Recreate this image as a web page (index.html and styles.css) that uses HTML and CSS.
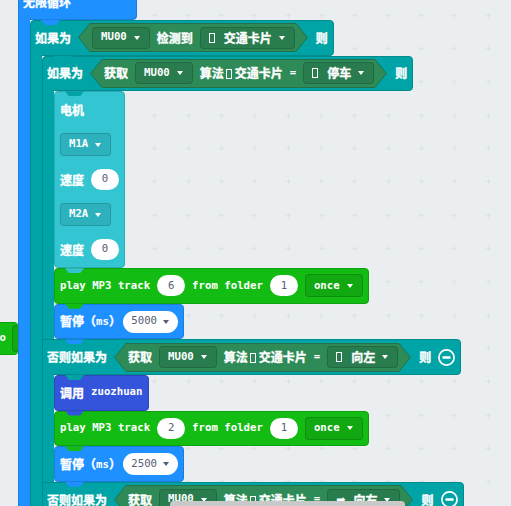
FILE: index.html
```html
<!DOCTYPE html>
<html lang="zh-CN">
<head>
<meta charset="utf-8">
<title>积木编辑器</title>
<link rel="stylesheet" href="styles.css">
</head>
<body>
<div class="workspace">

  <!-- a second stack, mostly hidden to the left of the canvas -->
  <div class="stmt music stray"><span class="m">to</span><span class="dd"><span class="m">x</span></span></div>

  <div class="cblock basic forever">
    <div class="chead"><span class="lbl">无限循环</span></div>
    <div class="cbody">
      <div class="carm"></div>
      <div class="mouth">

        <div class="cblock logic">
          <div class="chead">
            <span class="lbl">如果为</span>
            <div class="bool">
              <svg class="cap" width="12" height="29" viewBox="0 0 12 29"><path d="M12.6 .5H12L.7 14.5 12 28.5h.6"/></svg>
              <div class="bool-body">
                <span class="dd"><span class="m">MU00</span><i class="caret"></i></span>
                <span class="lbl">检测到</span>
                <span class="dd"><span class="tofu lead"></span><span class="lbl">交通卡片</span><i class="caret"></i></span>
              </div>
              <svg class="cap" width="12" height="29" viewBox="0 0 12 29"><path d="M-.6 .5H0l11.3 14L0 28.5h-.6"/></svg>
            </div>
            <span class="lbl">则</span>
          </div>
          <div class="cbody">
            <div class="carm"></div>
            <div class="mouth">

              <div class="cblock logic">
                <div class="chead">
                  <span class="lbl">如果为</span>
                  <div class="bool">
                    <svg class="cap" width="12" height="29" viewBox="0 0 12 29"><path d="M12.6 .5H12L.7 14.5 12 28.5h.6"/></svg>
                    <div class="bool-body">
                      <span class="lbl">获取</span>
                      <span class="dd"><span class="m">MU00</span><i class="caret"></i></span>
                      <span class="lbl">算法<span class="tofu"></span>交通卡片</span>
                      <span class="m eq">=</span>
                      <span class="dd"><span class="tofu lead"></span><span class="lbl">停车</span><i class="caret"></i></span>
                    </div>
                    <svg class="cap" width="12" height="29" viewBox="0 0 12 29"><path d="M-.6 .5H0l11.3 14L0 28.5h-.6"/></svg>
                  </div>
                  <span class="lbl">则</span>
                </div>
                <div class="cbody">
                  <div class="carm"></div>
                  <div class="mouth">
                    <div class="stmt motor">
                      <div class="mrow"><span class="lbl">电机</span></div>
                      <div class="mrow"><span class="dd"><span class="m">M1A</span><i class="caret"></i></span></div>
                      <div class="mrow"><span class="lbl">速度</span><span class="num"><span>0</span></span></div>
                      <div class="mrow"><span class="dd"><span class="m">M2A</span><i class="caret"></i></span></div>
                      <div class="mrow"><span class="lbl">速度</span><span class="num"><span>0</span></span></div>
                    </div>
                    <div class="stmt music">
                      <span class="m">play MP3 track</span>
                      <span class="num"><span>6</span></span>
                      <span class="m">from folder</span>
                      <span class="num"><span>1</span></span>
                      <span class="dd"><span class="m">once</span><i class="caret"></i></span>
                    </div>
                    <div class="stmt basic">
                      <span class="lbl tight">暂停（<span class="m">ms</span>）</span>
                      <span class="num drop"><span>5000</span><i class="caret"></i></span>
                    </div>
                  </div>
                </div>
                <div class="chead elif">
                  <span class="lbl">否则如果为</span>
                  <div class="bool">
                    <svg class="cap" width="12" height="29" viewBox="0 0 12 29"><path d="M12.6 .5H12L.7 14.5 12 28.5h.6"/></svg>
                    <div class="bool-body">
                      <span class="lbl">获取</span>
                      <span class="dd"><span class="m">MU00</span><i class="caret"></i></span>
                      <span class="lbl">算法<span class="tofu"></span>交通卡片</span>
                      <span class="m eq">=</span>
                      <span class="dd"><span class="tofu lead"></span><span class="lbl">向左</span><i class="caret"></i></span>
                    </div>
                    <svg class="cap" width="12" height="29" viewBox="0 0 12 29"><path d="M-.6 .5H0l11.3 14L0 28.5h-.6"/></svg>
                  </div>
                  <span class="lbl">则</span>
                  <svg class="minus" width="17" height="17" viewBox="0 0 17 17"><circle cx="8.5" cy="8.5" r="7.6"/><rect x="4.3" y="7.3" width="8.4" height="2.4" rx="1"/></svg>
                </div>
                <div class="cbody">
                  <div class="carm"></div>
                  <div class="mouth">
                    <div class="stmt func">
                      <span class="lbl">调用</span>
                      <span class="m">zuozhuan</span>
                    </div>
                    <div class="stmt music">
                      <span class="m">play MP3 track</span>
                      <span class="num"><span>2</span></span>
                      <span class="m">from folder</span>
                      <span class="num"><span>1</span></span>
                      <span class="dd"><span class="m">once</span><i class="caret"></i></span>
                    </div>
                    <div class="stmt basic">
                      <span class="lbl tight">暂停（<span class="m">ms</span>）</span>
                      <span class="num drop"><span>2500</span><i class="caret"></i></span>
                    </div>
                  </div>
                </div>
                <div class="chead elif">
                  <span class="lbl">否则如果为</span>
                  <div class="bool">
                    <svg class="cap" width="12" height="29" viewBox="0 0 12 29"><path d="M12.6 .5H12L.7 14.5 12 28.5h.6"/></svg>
                    <div class="bool-body">
                      <span class="lbl">获取</span>
                      <span class="dd"><span class="m">MU00</span><i class="caret"></i></span>
                      <span class="lbl">算法<span class="tofu"></span>交通卡片</span>
                      <span class="m eq">=</span>
                      <span class="dd"><span class="sym">➡</span><span class="lbl">向右</span><i class="caret"></i></span>
                    </div>
                    <svg class="cap" width="12" height="29" viewBox="0 0 12 29"><path d="M-.6 .5H0l11.3 14L0 28.5h-.6"/></svg>
                  </div>
                  <span class="lbl">则</span>
                  <svg class="minus" width="17" height="17" viewBox="0 0 17 17"><circle cx="8.5" cy="8.5" r="7.6"/><rect x="4.3" y="7.3" width="8.4" height="2.4" rx="1"/></svg>
                </div>
              </div>

            </div>
          </div>
        </div>

      </div>
    </div>
  </div>

  <div class="hscroll"></div>
</div>
</body>
</html>
```
FILE: styles.css
```css
* { box-sizing: border-box; }

html {
  overflow: hidden;
  background: #eaeef1;
}

/* workspace canvas with a faint cross grid */
body {
  margin: 0;
  display: flow-root;
  min-height: 100vh;
  background-color: #eaeef1;
  background-image: url("data:image/svg+xml,%3Csvg xmlns='http://www.w3.org/2000/svg' width='100' height='100'%3E%3Cpath stroke='%23dce1e4' stroke-width='1' d='M19 15.5h5M21.5 13v5M52 15.5h5M54.5 13v5M86 15.5h5M88.5 13v5M19 48.5h5M21.5 46v5M52 48.5h5M54.5 46v5M86 48.5h5M88.5 46v5M19 81.5h5M21.5 79v5M52 81.5h5M54.5 79v5M86 81.5h5M88.5 79v5'/%3E%3C/svg%3E");
  background-size: 100px 100px;
  font-family: "Noto Sans CJK SC", sans-serif;
}

.workspace {
  margin-top: -15.6px;
}

/* block palettes */
.basic { --c: #1e90ff; --b: #1a7de0; }
.logic { --c: #00a4a6; --b: #008b8d; }
.music { --c: #13bc13; --b: #10a110; }
.motor { --c: #33c6d2; --b: #2cabb6; }
.func  { --c: #3455db; --b: #2c48bd; }

/* text */
.lbl {
  font: 700 12px/1 "Noto Sans CJK SC", sans-serif;
  color: #fff;
  white-space: nowrap;
  -webkit-text-stroke: 0.35px #fff;
}
.m {
  font: 700 10.7px/1 "DejaVu Sans Mono", monospace;
  color: #fff;
  white-space: nowrap;
  -webkit-text-stroke: 0;
}
.lbl .m { vertical-align: 1px; }
.lbl.tight { margin-right: -4.6px; }
.sym {
  font: 400 11px/1 "DejaVu Sans", sans-serif;
  color: #fff;
  margin-right: 1px;
}

/* missing-glyph box */
.tofu {
  display: inline-block;
  width: 6px;
  height: 10px;
  border: 1px solid #fff;
  margin: 0 3px 0 2px;
  vertical-align: -1px;
}
.dd .tofu.lead { margin: 0 2px 0 0; }

/* statement blocks */
.stmt {
  position: relative;
  display: flex;
  align-items: center;
  gap: 7px;
  height: 35.6px;
  padding: 0 5px;
  background: var(--c);
  border: 1px solid var(--b);
  border-radius: 4px;
  flex: none;
}

/* connection tab hanging below a block */
.stmt::after,
.chead::after {
  content: "";
  position: absolute;
  z-index: 1;
  top: 100%;
  left: 10px;
  width: 19px;
  height: 5px;
  margin-top: 1px;
  background: var(--c);
  clip-path: polygon(0 0, 100% 0, calc(100% - 4px) 100%, 4px 100%);
}
.chead::after { left: 22px; }

/* C-shaped blocks */
.cblock {
  display: flex;
  flex-direction: column;
  align-items: flex-start;
  flex: none;
}
.forever { margin-left: 18px; }

.chead {
  position: relative;
  display: flex;
  align-items: center;
  gap: 7px;
  height: 35.6px;
  padding: 0 5px 0 4px;
  background: var(--c);
  border: 1px solid var(--b);
  border-radius: 4px 4px 4px 0;
}
.chead.elif { border-radius: 0 4px 4px 0; }
.forever > .chead { width: 119px; }

.cbody {
  display: flex;
  align-self: stretch;
}
.carm {
  position: relative;
  width: 12px;
  flex: none;
  margin-top: -1px;
  margin-bottom: -1px;
  background: var(--c);
  border-left: 1px solid var(--b);
}
.mouth {
  display: flex;
  flex-direction: column;
  align-items: flex-start;
}

/* hexagonal boolean input */
.bool {
  --c: #2e8b57;
  --b: #23714a;
  display: flex;
  align-items: center;
  height: 29px;
  margin-right: 1px;
}
.cap {
  flex: none;
  overflow: visible;
}
.cap path {
  fill: var(--c);
  stroke: var(--b);
  stroke-width: 1;
}
.bool-body {
  display: flex;
  align-items: center;
  gap: 7px;
  height: 29px;
  padding: 0 1px 0 2px;
  background: var(--c);
  border-top: 1px solid var(--b);
  border-bottom: 1px solid var(--b);
}

/* dropdown field */
.dd {
  display: flex;
  align-items: center;
  gap: 7px;
  height: 23px;
  padding: 0 9px 0 8px;
  border-radius: 4px;
  background: rgba(0, 0, 0, 0.1);
  border: 1px solid rgba(0, 0, 0, 0.16);
  flex: none;
}
.bool .dd { height: 22px; }
.caret {
  width: 0;
  height: 0;
  border-left: 3.5px solid transparent;
  border-right: 3.5px solid transparent;
  border-top: 4px solid #fff;
  flex: none;
}

/* rounded number field */
.num {
  display: flex;
  align-items: center;
  justify-content: center;
  height: 21px;
  min-width: 28px;
  padding: 0 8px;
  border-radius: 10.5px;
  background: #fff;
  color: #575e75;
  font: 400 10.7px/1 "DejaVu Sans Mono", monospace;
  flex: none;
}
.num.drop {
  gap: 6px;
  padding: 0 9px 0 8px;
  height: 22px;
  border-radius: 11px;
}
.num .caret { border-top-color: #575e75; }

/* motor block with stacked inputs */
.motor {
  flex-direction: column;
  align-items: stretch;
  gap: 0;
  height: 177px;
}
.mrow {
  display: flex;
  align-items: center;
  gap: 7px;
  height: 35px;
}

.minus { flex: none; }
.minus circle { fill: none; stroke: #fff; stroke-width: 1.7; }
.minus rect { fill: #fff; }

/* canvas-placed pieces */
.stray {
  position: absolute;
  left: -12px;
  top: 322px;
  width: 30px;
  height: 33px;
  overflow: hidden;
  border-right: 0;
  gap: 6px;
  padding: 0 0 0 4px;
}
.stray::after { display: none; }
.stray .dd { height: 27px; width: 30px; }

.hscroll {
  position: absolute;
  z-index: 2;
  left: 170px;
  top: 501px;
  width: 235px;
  height: 9px;
  border-radius: 4px;
  background: #c9c9c9;
}
```
